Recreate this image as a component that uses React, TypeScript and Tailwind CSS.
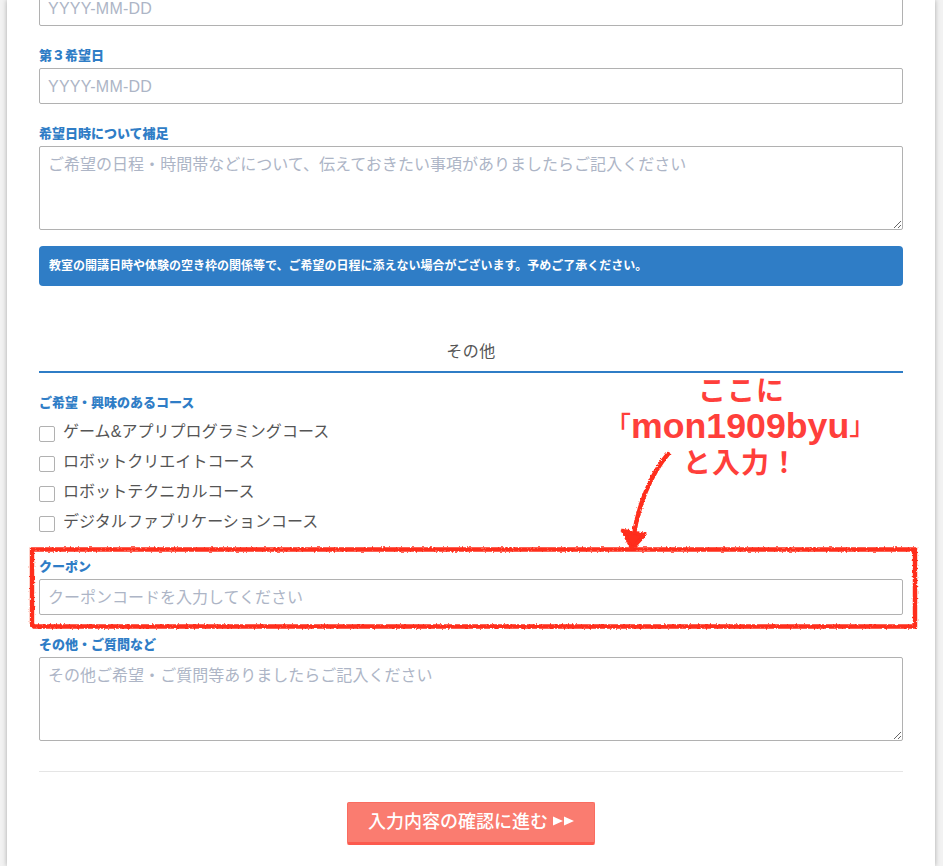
import type { ReactNode } from "react";

const COURSES = [
  "ゲーム&アプリプログラミングコース",
  "ロボットクリエイトコース",
  "ロボットテクニカルコース",
  "デジタルファブリケーションコース",
];

const CONTROL =
  "block w-full rounded-xs border border-[#b1b1b1] bg-white px-2 text-base text-[#555] placeholder:text-[#adb5c6] placeholder:opacity-100";

function Label({ children }: { children: ReactNode }) {
  return (
    <div className="h-[26px] pt-px text-[13px] leading-[26px] font-extrabold text-[#2f7dc6]">
      {children}
    </div>
  );
}

function TextField({ label, placeholder, className = "" }: { label?: string; placeholder: string; className?: string }) {
  return (
    <label className="mb-4 block">
      {label && <Label>{label}</Label>}
      <input type="text" placeholder={placeholder} className={`${CONTROL} h-9 pt-[3px] pb-px ${className}`} />
    </label>
  );
}

function TextArea({ label, placeholder }: { label: string; placeholder: string }) {
  return (
    <label className="block">
      <Label>{label}</Label>
      <textarea
        placeholder={placeholder}
        className={`${CONTROL} h-[84px] resize-y py-[6px] leading-6 tracking-[0.02px]`}
      />
    </label>
  );
}

function CouponNote() {
  return (
    <div className="pointer-events-none absolute inset-0">
      <svg width="943" height="866" viewBox="0 0 943 866" fill="none">
        <defs>
          <filter id="crayon" filterUnits="userSpaceOnUse" x="0" y="430" width="943" height="220">
            <feTurbulence type="fractalNoise" baseFrequency="0.5" numOctaves="2" seed="4" result="noise" />
            <feDisplacementMap in="SourceGraphic" in2="noise" scale="3" xChannelSelector="R" yChannelSelector="G" />
          </filter>
        </defs>
        <g filter="url(#crayon)" stroke="#ff2d1c" strokeLinecap="round">
          <path d="M32 549.5H915V626.5H34L32 624Z" strokeWidth="4.4" strokeLinejoin="miter" />
          <path d="M668 454C650 475 638 507 634 534" strokeWidth="4.4" />
          <path d="M622.5 530.5L645 534.5L632 549Z" fill="#ff2d1c" strokeWidth="3.5" strokeLinejoin="round" />
        </g>
      </svg>
      <div className="absolute top-[377px] left-[698px] text-[28px] leading-[30px] font-bold tracking-[1px] whitespace-nowrap text-[#ff3f3b]">
        ここに
      </div>
      <div className="absolute top-[408px] left-[605px] flex text-[26px] leading-9 font-medium whitespace-nowrap text-[#ff3f3b]">
        <span>「</span>
        <span className="text-[35.7px] font-bold">mon1909byu</span>
        <span>」</span>
      </div>
      <div className="absolute top-[449px] left-[683px] text-[28px] leading-[30px] font-bold tracking-[1px] whitespace-nowrap text-[#ff3f3b]">
        と入力！
      </div>
    </div>
  );
}

export default function App() {
  return (
    <div
      lang="ja"
      className="relative h-[866px] w-[943px] overflow-hidden bg-[#f2f2f2] pl-[7px] font-['Liberation_Sans','Noto_Sans_CJK_JP',sans-serif] text-[#555]"
    >
      <main className="flow-root h-[866px] w-[928px] bg-white px-8 shadow-[0_0_5px_rgba(0,0,0,0.3)]">
        <form className="-mt-2.5">
          <TextField placeholder="YYYY-MM-DD" className="tracking-[0.25px]" />
          <TextField label="第３希望日" placeholder="YYYY-MM-DD" className="tracking-[0.25px]" />
          <TextArea
            label="希望日時について補足"
            placeholder="ご希望の日程・時間帯などについて、伝えておきたい事項がありましたらご記入ください"
          />
          <p className="mt-4 h-10 rounded bg-[#2f7dc6] px-2.5 text-xs leading-10 font-bold text-white">
            教室の開講日時や体験の空き枠の関係等で、ご希望の日程に添えない場合がございます。予めご了承ください。
          </p>

          <h2 className="mt-[43px] mb-4 h-11 border-b-2 border-[#2f7dc6] pt-px text-center text-base leading-[44px] tracking-[0.5px]">
            その他
          </h2>

          <Label>ご希望・興味のあるコース</Label>
          <ul className="mt-px mb-[17px]">
            {COURSES.map((course) => (
              <li key={course}>
                <label className="flex h-[30px] gap-2 leading-[30px] tracking-[0.05px]">
                  <input
                    type="checkbox"
                    className="mt-2.5 size-4 appearance-none rounded-xs border border-[#b1b1b1] bg-white"
                  />
                  <span className="pt-px">{course}</span>
                </label>
              </li>
            ))}
          </ul>

          <TextField label="クーポン" placeholder="クーポンコードを入力してください" />
          <TextArea
            label="その他・ご質問など"
            placeholder="その他ご希望・ご質問等ありましたらご記入ください"
          />

          <div className="mt-[30px] flex justify-center border-t border-[#e5e5e5] pt-[30px]">
            <button
              type="button"
              className="flex h-[43px] w-[248px] items-center justify-center gap-1.5 rounded-xs border border-b-[3px] border-[#fa6c60] border-b-[#fc5a4e] bg-[#fa7c70] pb-0.5 text-lg font-medium text-white"
            >
              入力内容の確認に進む
              <svg width="21" height="10" viewBox="0 0 21 10" className="-mt-0.5 -ml-px" fill="currentColor">
                <path d="M0 .5L10 5L0 9.5ZM11 .5L21 5L11 9.5Z" />
              </svg>
            </button>
          </div>
        </form>
      </main>
      <CouponNote />
    </div>
  );
}
